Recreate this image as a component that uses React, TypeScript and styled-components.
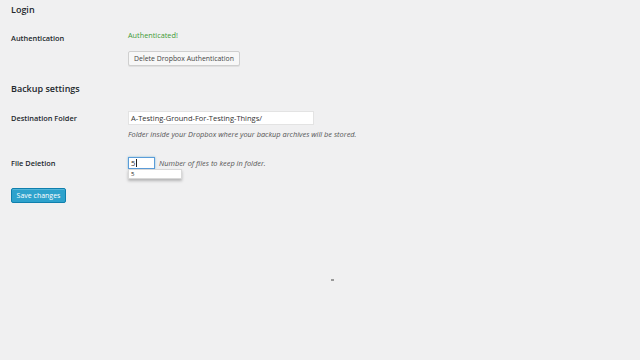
import React from "react";
import styled, { createGlobalStyle } from "styled-components";

const GlobalStyle = createGlobalStyle`
  html, body {
    margin: 0;
    padding: 0;
    background: #f0f0f1;
  }
  body {
    font-family: "Open Sans", "Noto Sans", sans-serif;
    color: #23282d;
  }
`;

const Page = styled.div`
  position: relative;
  width: 640px;
  height: 360px;
  padding: 4px 0 0 11px;
  box-sizing: border-box;
  overflow: hidden;
`;

const Heading = styled.h2<{ $top?: number }>`
  margin: ${(p) => p.$top ?? 0}px 0 0;
  font-size: 9px;
  line-height: 12px;
  font-weight: 600;
  color: #23282d;
`;

const Row = styled.div<{ $top: number }>`
  display: grid;
  grid-template-columns: 117px 1fr;
  margin-top: ${(p) => p.$top}px;
`;

const Label = styled.div<{ $pad: number }>`
  padding-top: ${(p) => p.$pad}px;
  font-size: 7.4px;
  line-height: 11px;
  font-weight: 600;
  color: #23282d;
`;

const Cell = styled.div`
  display: flex;
  flex-direction: column;
  align-items: flex-start;
`;

const Status = styled.div`
  font-size: 7.3px;
  line-height: 11px;
  color: #3f9a35;
`;

const SecondaryButton = styled.button`
  margin-top: 10px;
  height: 15px;
  width: 112px;
  padding: 0;
  border: 1px solid #cfcfcf;
  border-radius: 2px;
  background: #f7f7f7;
  box-shadow: 0 1px 0 #e0e0e0;
  font-family: inherit;
  font-size: 6.9px;
  color: #444;
`;

const TextInput = styled.div<{ $w: number; $h: number }>`
  position: relative;
  box-sizing: border-box;
  width: ${(p) => p.$w}px;
  height: ${(p) => p.$h}px;
  padding-left: 2px;
  background: #fff;
  border: 1px solid #e3e3e3;
  font-size: 7.5px;
  line-height: ${(p) => p.$h - 2}px;
  color: #333;
`;

const FocusInput = styled(TextInput)`
  border-color: #5b9dd9;
  box-shadow: 0 0 2px rgba(30, 140, 190, 0.5);
`;

const Caret = styled.span`
  display: inline-block;
  width: 1px;
  height: 8px;
  margin-left: 0.5px;
  vertical-align: -1px;
  background: #222;
`;

const Description = styled.div`
  margin-top: 4px;
  font-size: 7.4px;
  line-height: 10px;
  font-style: italic;
  color: #555;
`;

const Inline = styled.div`
  display: flex;
  align-items: center;
  gap: 4px;
`;

const InlineNote = styled.span`
  font-size: 7.4px;
  font-style: italic;
  color: #555;
`;

const Suggest = styled.div`
  position: absolute;
  left: -1px;
  top: 11px;
  width: 54px;
  height: 10px;
  box-sizing: border-box;
  padding-left: 2px;
  background: #fff;
  border: 1px solid #d8d8d8;
  box-shadow: 0 2px 3px rgba(0, 0, 0, 0.25);
  font-size: 6px;
  line-height: 8px;
  color: #222;
`;

const PrimaryButton = styled.button`
  display: block;
  margin-top: 19px;
  width: 55px;
  height: 15px;
  padding: 0;
  border: 1px solid #0f7fad;
  border-radius: 2px;
  background: #2ea2cc;
  box-shadow: inset 0 1px 0 rgba(120, 200, 230, 0.5);
  font-family: inherit;
  font-size: 7px;
  color: #fff;
`;

const Speck = styled.div`
  position: absolute;
  left: 331px;
  top: 279px;
  width: 3px;
  height: 2px;
  background: #9a9a9a;
  filter: blur(0.5px);
`;

export default function App() {
  return (
    <>
      <GlobalStyle />
      <Page>
        <Heading>Login</Heading>
        <Row $top={14}>
          <Label $pad={3}>Authentication</Label>
          <Cell>
            <Status>Authenticated!</Status>
            <SecondaryButton>Delete Dropbox Authentication</SecondaryButton>
          </Cell>
        </Row>

        <Heading $top={17}>Backup settings</Heading>
        <Row $top={16}>
          <Label $pad={1.5}>Destination Folder</Label>
          <Cell>
            <TextInput $w={186} $h={14}>
              A-Testing-Ground-For-Testing-Things/
            </TextInput>
            <Description>
              Folder inside your Dropbox where your backup archives will be stored.
            </Description>
          </Cell>
        </Row>

        <Row $top={18}>
          <Label $pad={0.5}>File Deletion</Label>
          <Cell>
            <Inline>
              <FocusInput $w={27} $h={12}>
                5<Caret />
                <Suggest>5</Suggest>
              </FocusInput>
              <InlineNote>Number of files to keep in folder.</InlineNote>
            </Inline>
          </Cell>
        </Row>

        <PrimaryButton>Save changes</PrimaryButton>
        <Speck />
      </Page>
    </>
  );
}
